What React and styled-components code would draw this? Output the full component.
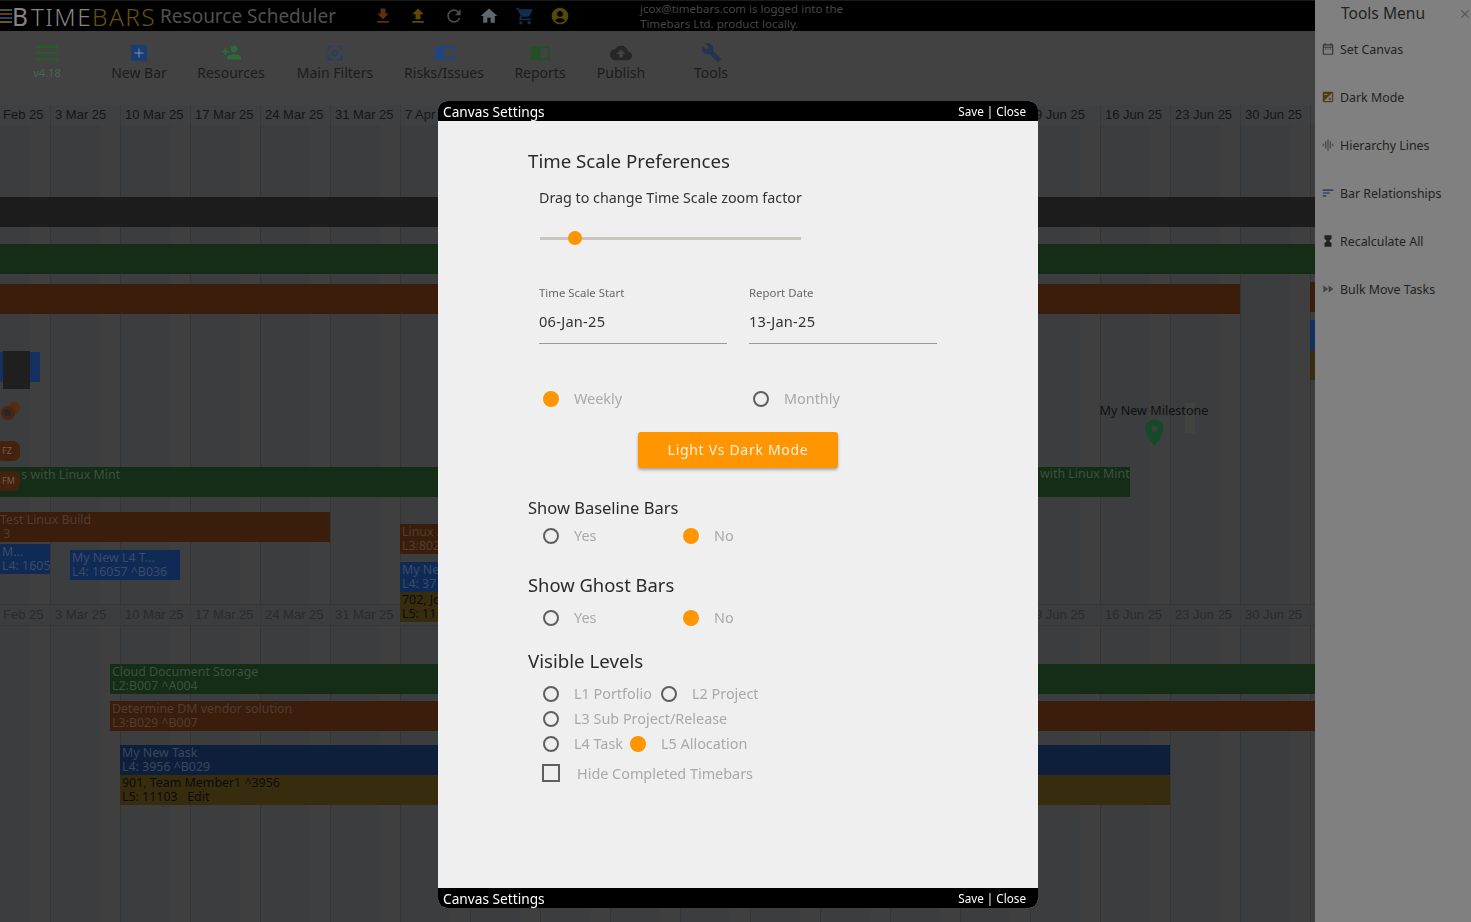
import React from "react";
import styled, { createGlobalStyle } from "styled-components";
import {
  MdFileDownload,
  MdFileUpload,
  MdRefresh,
  MdHome,
  MdShoppingCart,
  MdAccountCircle,
  MdMenu,
  MdPersonAdd,
  MdCenterFocusWeak,
  MdImportContacts,
  MdCloudUpload,
  MdBuild,
  MdOutlineDateRange,
  MdExposure,
  MdGraphicEq,
  MdSort,
  MdHourglassFull,
  MdFastForward,
  MdClose,
  MdPlace,
} from "react-icons/md";

const UI_FONT = `"Noto Sans", "Open Sans", sans-serif`;
const ORANGE = "#ff9500";

const GREEN = "#152c16";
const BROWN = "#3a1d0b";
const BLUE = "#0e1f3b";
const MIDBLUE = "#0f2a54";
const OCHRE = "#382c0e";

const dates = [
  "24 Feb 25", "3 Mar 25", "10 Mar 25", "17 Mar 25", "24 Mar 25", "31 Mar 25", "7 Apr 25",
  "14 Apr 25", "21 Apr 25", "28 Apr 25", "5 May 25", "12 May 25", "19 May 25", "26 May 25",
  "2 Jun 25", "9 Jun 25", "16 Jun 25", "23 Jun 25", "30 Jun 25", "7 Jul 25",
];

const topIcons = [
  { Icon: MdFileDownload, color: "#5e3010" },
  { Icon: MdFileUpload, color: "#5e4a04" },
  { Icon: MdRefresh, color: "#4c4c4c" },
  { Icon: MdHome, color: "#5e6870" },
  { Icon: MdShoppingCart, color: "#102f50" },
  { Icon: MdAccountCircle, color: "#554708" },
];

const tools = [
  { label: "Set Canvas", Icon: MdOutlineDateRange, color: "#333" },
  { label: "Dark Mode", Icon: MdExposure, color: "#4a3d10" },
  { label: "Hierarchy Lines", Icon: MdGraphicEq, color: "#444" },
  { label: "Bar Relationships", Icon: MdSort, color: "#1d2f55" },
  { label: "Recalculate All", Icon: MdHourglassFull, color: "#222" },
  { label: "Bulk Move Tasks", Icon: MdFastForward, color: "#444" },
];

// canvas items, y is measured from the top of the window
const bars = [
  { x: 0, y: 197, w: 1315, bg: "#1c1c1c" },
  { x: 0, y: 244, w: 1315, bg: GREEN },
  { x: 0, y: 284, w: 1240, bg: BROWN },
  { x: 1310, y: 282, w: 5, bg: BROWN },
  { x: 1310, y: 320, w: 5, bg: "#123060" },
  { x: 1310, y: 350, w: 5, bg: OCHRE },
  { x: 0, y: 352, w: 40, bg: "#123060" },
  { x: 0, y: 467, w: 1130, bg: GREEN, fg: "#3c523e", lines: ["      s with Linux Mint"] },
  { x: -2, y: 512, w: 332, bg: BROWN, fg: "#4f3e32", lines: ["Test Linux Build", " 3"] },
  { x: 0, y: 544, w: 50, bg: MIDBLUE, fg: "#3a4c6e", lines: ["M...", "L4: 1605"] },
  { x: 70, y: 550, w: 110, bg: MIDBLUE, fg: "#3a4c6e", lines: ["My New L4 T...", "L4: 16057 ^B036"] },
  { x: 400, y: 524, w: 38, bg: BROWN, fg: "#4f3e32", lines: ["Linux ...", "L3:802"] },
  { x: 400, y: 562, w: 38, bg: MIDBLUE, fg: "#3a4c6e", lines: ["My New", "L4: 37"] },
  { x: 400, y: 592, w: 38, bg: OCHRE, fg: "#0c0c0c", lines: ["702, Jo", "L5: 11"] },
  { x: 110, y: 664, w: 1205, bg: GREEN, fg: "#3c523e", lines: ["Cloud Document Storage", "L2:B007 ^A004"] },
  { x: 110, y: 701, w: 1205, bg: BROWN, fg: "#4f3e32", lines: ["Determine DM vendor solution", "L3:B029 ^B007"] },
  { x: 120, y: 745, w: 1050, bg: BLUE, fg: "#3a475d", lines: ["My New Task", "L4: 3956 ^B029"] },
  { x: 120, y: 775, w: 1050, bg: OCHRE, fg: "#0c0c0c", lines: ["901, Team Member1 ^3956", "L5: 11103   Edit"] },
];

const GlobalStyle = createGlobalStyle`
  html, body {
    margin: 0;
    padding: 0;
    height: 100%;
    overflow: hidden;
    background: #3c3d3e;
    font-family: ${UI_FONT};
  }
  * { box-sizing: border-box; }
`;

const Page = styled.div`
  display: flex;
  width: 1471px;
  height: 922px;
  overflow: hidden;
`;

const Workspace = styled.div`
  flex: 1;
  min-width: 0;
  display: flex;
  flex-direction: column;
`;

const TopBar = styled.header`
  height: 31px;
  flex: none;
  display: flex;
  align-items: center;
  background: #000;
  border-top: 1px solid #1a1a1a;
  overflow: hidden;
`;

const Logo = styled.div`
  display: flex;
  align-items: center;
  width: 160px;
  flex: none;
  font-size: 24.5px;
  font-weight: 300;
  letter-spacing: 1.4px;
  color: #858585;
  span { color: #68500f; }
  b {
    font-weight: 400;
    letter-spacing: 0;
    margin-right: 3px;
  }
`;

const Stripes = styled.svg`
  width: 12px;
  height: 16px;
  flex: none;
`;

const ProductName = styled.div`
  width: 208px;
  flex: none;
  font-size: 19px;
  color: #505050;
  white-space: nowrap;
`;

const TopIcons = styled.div`
  display: flex;
  width: 272px;
  flex: none;
  padding-left: 5px;
  gap: 15.4px;
`;

const LoginNote = styled.div`
  font-size: 11.5px;
  line-height: 15px;
  color: #474747;
  white-space: nowrap;
`;

const ToolBar = styled.nav`
  height: 64px;
  flex: none;
  display: flex;
  background: #424242;
`;

const ToolItem = styled.div`
  width: ${(p) => p.$w}px;
  flex: none;
  display: flex;
  flex-direction: column;
  align-items: center;
  padding-top: 11px;
`;

const ToolIcon = styled.div`
  height: 21px;
  display: flex;
  align-items: center;
  color: ${(p) => p.$color};
`;

const ToolLabel = styled.div`
  font-size: 14px;
  line-height: 19px;
  color: ${(p) => p.$color || "#1c1c1c"};
  white-space: nowrap;
`;

const Version = styled(ToolLabel)`
  font-size: 11px;
  color: #46664a;
`;

const NewBarIcon = styled.svg`
  width: 16px;
  height: 16px;
`;

const Canvas = styled.main`
  position: relative;
  flex: 1;
  overflow: hidden;
  display: flex;
  flex-direction: column;
  background-color: #3c3d3e;
  background-image: linear-gradient(
    90deg,
    transparent 0,
    transparent 49px,
    #3e3f3e 49px,
    #3e3f3e 69px,
    #343536 69px,
    #343536 70px
  );
  background-size: 70px 100%;
  background-position: -19px 0;
`;

const DateHeader = styled.div`
  flex: none;
  height: 30px;
  padding-top: 10px;
  background: #414243;
`;

const DateFooter = styled.div`
  flex: none;
  height: 22px;
  margin-top: 479px;
  border-top: 1px solid #363738;
  border-bottom: 1px solid #363738;
`;

const DateRow = styled.div`
  display: flex;
  height: 100%;
  margin-left: -19px;
`;

const DateCell = styled.div`
  flex: none;
  width: 70px;
  height: 100%;
  padding-left: 4px;
  border-right: 1px solid #38393a;
  font-family: "Liberation Sans", Arial, sans-serif;
  font-size: 13px;
  line-height: 20px;
  color: ${(p) => p.$color};
  background: ${(p) => p.$bg};
  white-space: nowrap;
`;

const Bar = styled.div`
  position: absolute;
  left: ${(p) => p.$x}px;
  top: ${(p) => p.$y - 95}px;
  width: ${(p) => p.$w}px;
  height: 30px;
  padding: 1px 2px 0;
  overflow: hidden;
  background: ${(p) => p.$bg};
  color: ${(p) => p.$fg || "transparent"};
  font-size: 12.4px;
  line-height: 14px;
  white-space: pre;
`;

const RightBarText = styled.div`
  position: absolute;
  left: 1040px;
  top: ${467 - 95}px;
  width: 90px;
  overflow: hidden;
  font-size: 12.4px;
  line-height: 14px;
  color: #3c523e;
  white-space: nowrap;
`;

const DarkTile = styled.div`
  position: absolute;
  left: 3px;
  top: ${351 - 95}px;
  width: 27px;
  height: 38px;
  background: #1f1f1f;
`;

const Blob = styled.div`
  position: absolute;
  left: ${(p) => p.$x}px;
  top: ${(p) => p.$y - 95}px;
  width: ${(p) => p.$size}px;
  height: ${(p) => p.$size}px;
  border-radius: 50%;
  background: ${(p) => p.$bg};
`;

const Pill = styled.div`
  position: absolute;
  left: -4px;
  top: ${(p) => p.$y - 95}px;
  width: 24px;
  height: 20px;
  padding-left: 6px;
  border-radius: 7px;
  background: #46210d;
  color: #6e6054;
  font-size: 9px;
  line-height: 20px;
`;

const Milestone = styled.div`
  position: absolute;
  left: 1089px;
  top: ${403 - 95}px;
  width: 130px;
  display: flex;
  flex-direction: column;
  align-items: center;
  font-size: 12.6px;
  line-height: 15px;
  color: #111;
  white-space: nowrap;
  svg { margin-top: -1px; }
`;

const MilestoneShade = styled.div`
  position: absolute;
  left: 1185px;
  top: ${403 - 95}px;
  width: 10px;
  height: 30px;
  background: #414341;
`;

const ToolsMenu = styled.aside`
  width: 156px;
  flex: none;
  background: #808080;
`;

const MenuHead = styled.div`
  position: relative;
  height: 25px;
  text-align: center;
  padding-right: 20px;
  font-size: 15.6px;
  line-height: 26px;
  color: #222;
  svg {
    position: absolute;
    right: -1px;
    top: 7px;
    color: #555;
  }
`;

const MenuList = styled.ul`
  margin: 0;
  padding: 0 0 0 6px;
  list-style: none;
`;

const MenuItem = styled.li`
  display: flex;
  align-items: center;
  gap: 5px;
  height: 48px;
  font-size: 12.4px;
  color: #222;
  white-space: nowrap;
  svg {
    flex: none;
    color: ${(p) => p.$color};
  }
`;

const Overlay = styled.div`
  position: fixed;
  inset: 0;
  display: flex;
  justify-content: center;
  padding: 101px 0 14px 5px;
`;

const Modal = styled.section`
  width: 600px;
  display: flex;
  flex-direction: column;
  border-radius: 9px;
  overflow: hidden;
  background: #efefef;
`;

const ModalBar = styled.div`
  flex: none;
  height: 20px;
  display: flex;
  align-items: center;
  justify-content: space-between;
  padding: 0 12px 0 5px;
  background: #000;
  color: #fff;
  font-size: 13.7px;
`;

const ModalActions = styled.span`
  font-size: 11.7px;
`;

const ModalBody = styled.div`
  flex: 1;
  padding: 28px 0 0 90px;
`;

const Heading = styled.h2`
  margin: ${(p) => p.$mt || 0}px 0 0;
  font-size: ${(p) => p.$size || 18.7}px;
  font-weight: 400;
  line-height: 24px;
  color: #2a2a2a;
`;

const Indented = styled.div`
  margin-left: ${(p) => p.$ml}px;
`;

const Hint = styled.p`
  margin: 15px 0 0;
  font-size: 14.3px;
  line-height: 20px;
  color: #333;
`;

const Slider = styled.div`
  position: relative;
  width: 261px;
  height: 16px;
  margin: 22px 0 0 1px;
  &::before {
    content: "";
    position: absolute;
    left: 0;
    right: 0;
    top: 7px;
    height: 3px;
    background: #c8c5c0;
  }
`;

const Thumb = styled.div`
  position: absolute;
  left: 28px;
  top: 1px;
  width: 14px;
  height: 14px;
  border-radius: 50%;
  background: ${ORANGE};
`;

const Fields = styled.div`
  display: flex;
  gap: 22px;
  margin-top: 40px;
`;

const Field = styled.div`
  width: 188px;
  border-bottom: 1px solid #999;
  padding-bottom: 12px;
`;

const FieldLabel = styled.div`
  font-size: 11.4px;
  line-height: 14px;
  color: #666;
`;

const FieldValue = styled.div`
  margin-top: 11px;
  font-size: 14.6px;
  letter-spacing: 0.25px;
  line-height: 20px;
  color: #333;
`;

const OptionRow = styled.div`
  display: flex;
  margin: ${(p) => p.$mt || 0}px 0 0 ${(p) => p.$ml || 4}px;
`;

const Option = styled.label`
  display: flex;
  align-items: center;
  width: ${(p) => (p.$w ? `${p.$w}px` : "auto")};
  flex: none;
  height: 20px;
  gap: 15px;
  font-size: 14.4px;
  color: #a9a9a9;
  white-space: nowrap;
`;

const OptionText = styled.span`
  margin-top: -2px;
`;

const Radio = styled.span`
  flex: none;
  width: 16px;
  height: 16px;
  border-radius: 50%;
  background: ${(p) => (p.$on ? ORANGE : "transparent")};
  border: ${(p) => (p.$on ? "none" : "2px solid #5f5f5f")};
`;

const CheckBox = styled(Radio)`
  width: 18px;
  height: 18px;
  border-radius: 0;
`;

const CheckRow = styled(OptionRow)`
  ${Option} { gap: 17px; }
`;

const ModeButton = styled.button`
  display: block;
  width: 200px;
  height: 36px;
  margin: 23px 0 0 110px;
  padding: 0 0 2px;
  border: none;
  border-radius: 3px;
  background: ${ORANGE};
  box-shadow: 0 2px 3px rgba(0, 0, 0, 0.3);
  color: #fdf2e0;
  font-family: inherit;
  font-size: 14px;
  letter-spacing: 0.7px;
`;

const Choice = ({ on, w, children }) => (
  <Option $w={w}>
    <Radio $on={on} />
    <OptionText>{children}</OptionText>
  </Option>
);

const App = () => {
  return (
    <>
      <GlobalStyle />
      <Page>
        <Workspace>
          <TopBar>
            <Logo>
              <Stripes viewBox="0 0 12 16">
                <rect y="1" width="12" height="2" fill="#3d5a3d" />
                <rect y="5" width="12" height="2" fill="#6a3a18" />
                <rect y="9" width="12" height="2" fill="#2a4270" />
                <rect y="13" width="12" height="2" fill="#6b5a1a" />
              </Stripes>
              <b>B</b>TIME<span>BARS</span>
            </Logo>
            <ProductName>Resource Scheduler</ProductName>
            <TopIcons>
              {topIcons.map(({ Icon, color }, i) => (
                <Icon key={i} size={20} color={color} />
              ))}
            </TopIcons>
            <LoginNote>
              jcox@timebars.com is logged into the
              <br />
              Timebars Ltd. product locally.
            </LoginNote>
          </TopBar>

          <ToolBar>
            <ToolItem $w={94}>
              <ToolIcon $color="#2a5a2c"><MdMenu size={30} /></ToolIcon>
              <Version>v4.18</Version>
            </ToolItem>
            <ToolItem $w={90}>
              <ToolIcon>
                <NewBarIcon viewBox="0 0 16 16">
                  <rect width="16" height="16" fill="#1a3d73" />
                  <path d="M8 3.5v9M3.5 8h9" stroke="#7f93b2" strokeWidth="1" />
                </NewBarIcon>
              </ToolIcon>
              <ToolLabel>New Bar</ToolLabel>
            </ToolItem>
            <ToolItem $w={94}>
              <ToolIcon $color="#2c6a39"><MdPersonAdd size={21} /></ToolIcon>
              <ToolLabel>Resources</ToolLabel>
            </ToolItem>
            <ToolItem $w={114}>
              <ToolIcon $color="#1f3f6b"><MdCenterFocusWeak size={20} /></ToolIcon>
              <ToolLabel>Main Filters</ToolLabel>
            </ToolItem>
            <ToolItem $w={104}>
              <ToolIcon $color="#1f4680"><MdImportContacts size={21} /></ToolIcon>
              <ToolLabel>Risks/Issues</ToolLabel>
            </ToolItem>
            <ToolItem $w={88}>
              <ToolIcon $color="#234f25"><MdImportContacts size={21} /></ToolIcon>
              <ToolLabel>Reports</ToolLabel>
            </ToolItem>
            <ToolItem $w={74}>
              <ToolIcon $color="#262626"><MdCloudUpload size={22} /></ToolIcon>
              <ToolLabel>Publish</ToolLabel>
            </ToolItem>
            <ToolItem $w={106}>
              <ToolIcon $color="#25334d"><MdBuild size={21} /></ToolIcon>
              <ToolLabel>Tools</ToolLabel>
            </ToolItem>
          </ToolBar>

          <Canvas>
            <DateHeader>
              <DateRow>
                {dates.map((d) => (
                  <DateCell key={d} $color="#161616" $bg="#3f4041">{d}</DateCell>
                ))}
              </DateRow>
            </DateHeader>
            <DateFooter>
              <DateRow>
                {dates.map((d) => (
                  <DateCell key={d} $color="#2a2b2c" $bg="#3c3d3e">{d}</DateCell>
                ))}
              </DateRow>
            </DateFooter>

            {bars.map((b) => (
              <Bar key={`${b.x}-${b.y}`} $x={b.x} $y={b.y} $w={b.w} $bg={b.bg} $fg={b.fg}>
                {b.lines && b.lines.join("\n")}
              </Bar>
            ))}
            <RightBarText>with Linux Mint</RightBarText>
            <DarkTile />
            <Blob $x={8} $y={402} $size={12} $bg="#5a2a10" />
            <Blob $x={1} $y={406} $size={14} $bg="#4c240f" />
            <Blob $x={4} $y={409} $size={7} $bg="#262626" />
            <Pill $y={441}>FZ</Pill>
            <Pill $y={471}>FM</Pill>
            <MilestoneShade />
            <Milestone>
              My New Milestone
              <MdPlace size={31} color="#134a29" />
            </Milestone>
          </Canvas>
        </Workspace>

        <ToolsMenu>
          <MenuHead>
            Tools Menu
            <MdClose size={14} />
          </MenuHead>
          <MenuList>
            {tools.map(({ label, Icon, color }) => (
              <MenuItem key={label} $color={color}>
                <Icon size={14} />
                {label}
              </MenuItem>
            ))}
          </MenuList>
        </ToolsMenu>
      </Page>

      <Overlay>
        <Modal>
          <ModalBar>
            Canvas Settings
            <ModalActions>Save | Close</ModalActions>
          </ModalBar>
          <ModalBody>
            <Heading>Time Scale Preferences</Heading>
            <Indented $ml={11}>
              <Hint>Drag to change Time Scale zoom factor</Hint>
              <Slider><Thumb /></Slider>
              <Fields>
                <Field>
                  <FieldLabel>Time Scale Start</FieldLabel>
                  <FieldValue>06-Jan-25</FieldValue>
                </Field>
                <Field>
                  <FieldLabel>Report Date</FieldLabel>
                  <FieldValue>13-Jan-25</FieldValue>
                </Field>
              </Fields>
            </Indented>

            <OptionRow $mt={45} $ml={15}>
              <Choice on w={210}>Weekly</Choice>
              <Choice>Monthly</Choice>
            </OptionRow>
            <ModeButton>Light Vs Dark Mode</ModeButton>

            <Heading $mt={28} $size={16.5}>Show Baseline Bars</Heading>
            <OptionRow $mt={6} $ml={15}>
              <Choice w={140}>Yes</Choice>
              <Choice on>No</Choice>
            </OptionRow>

            <Heading $mt={27} $size={18.4}>Show Ghost Bars</Heading>
            <OptionRow $mt={11} $ml={15}>
              <Choice w={140}>Yes</Choice>
              <Choice on>No</Choice>
            </OptionRow>

            <Heading $mt={21}>Visible Levels</Heading>
            <OptionRow $mt={11} $ml={15}>
              <Choice w={118}>L1 Portfolio</Choice>
              <Choice>L2 Project</Choice>
            </OptionRow>
            <OptionRow $mt={5} $ml={15}>
              <Choice>L3 Sub Project/Release</Choice>
            </OptionRow>
            <OptionRow $mt={5} $ml={15}>
              <Choice w={87}>L4 Task</Choice>
              <Choice on>L5 Allocation</Choice>
            </OptionRow>
            <CheckRow $mt={9} $ml={14}>
              <Option>
                <CheckBox />
                Hide Completed Timebars
              </Option>
            </CheckRow>
          </ModalBody>
          <ModalBar>
            Canvas Settings
            <ModalActions>Save | Close</ModalActions>
          </ModalBar>
        </Modal>
      </Overlay>
    </>
  );
};

export default App;
